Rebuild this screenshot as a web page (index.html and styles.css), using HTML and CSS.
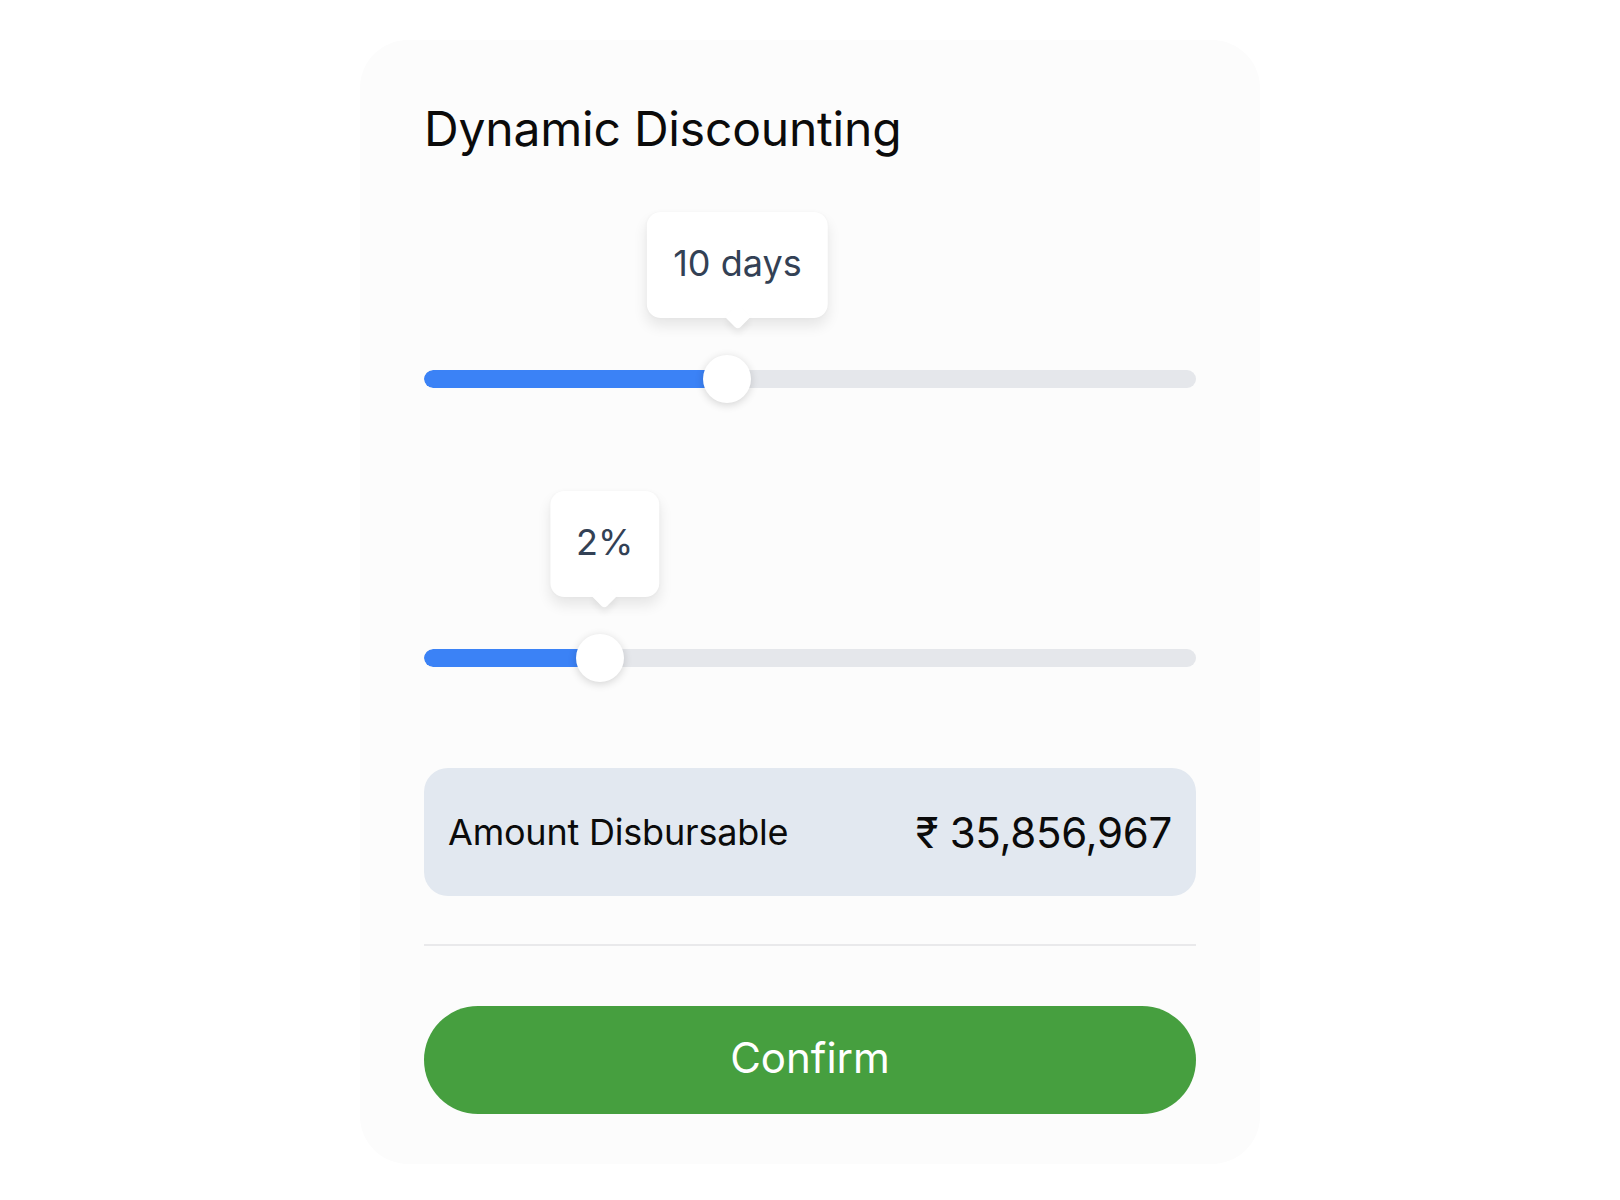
FILE: index.html
```html
<!DOCTYPE html>
<html lang="en">
<head>
<meta charset="utf-8">
<title>Dynamic Discounting</title>
<link rel="stylesheet" href="styles.css">
</head>
<body>
  <main class="card">
    <h1 class="title">Dynamic Discounting</h1>

    <div class="slider slider-days">
      <div class="track">
        <div class="fill" style="width: 39.25%"></div>
      </div>
      <div class="thumb" style="left: 39.25%"></div>
      <div class="tip" style="left: 40.6%">10 days</div>
    </div>

    <div class="slider slider-rate">
      <div class="track">
        <div class="fill" style="width: 22.8%"></div>
      </div>
      <div class="thumb" style="left: 22.8%"></div>
      <div class="tip" style="left: 23.4%">2%</div>
    </div>

    <div class="amount">
      <span class="amount-label">Amount Disbursable</span>
      <span class="amount-value">₹ 35,856,967</span>
    </div>

    <hr class="divider">

    <button class="confirm" type="button">Confirm</button>
  </main>
</body>
</html>
```

FILE: styles.css
```css
* { box-sizing: border-box; }

html, body {
  margin: 0;
  padding: 0;
  background: #ffffff;
}

body {
  font-family: Inter, "Noto Sans", "Liberation Sans", sans-serif;
  padding: 40px 0;
  display: flex;
  justify-content: center;
}

.card {
  width: 900px;
  height: 1124px;
  background: #fcfcfc;
  border-radius: 48px;
  padding: 60px 64px 42px;
  display: flex;
  flex-direction: column;
}

.title {
  margin: 0;
  font-size: 48px;
  line-height: 58px;
  font-weight: 400;
  color: #0b0b0b;
  letter-spacing: -0.2px;
}

.slider {
  position: relative;
  height: 48px;
  display: flex;
  align-items: center;
}

.slider-days { margin-top: 197px; }
.slider-rate { margin-top: 231px; }

.track {
  width: 100%;
  height: 18px;
  border-radius: 9px;
  background: #e5e7eb;
  overflow: hidden;
}

.fill {
  height: 100%;
  background: #3b82f6;
  border-radius: 9px 0 0 9px;
}

.thumb {
  position: absolute;
  top: 0;
  width: 48px;
  height: 48px;
  margin-left: -24px;
  border-radius: 50%;
  background: #ffffff;
  box-shadow: 0 2px 8px rgba(0, 0, 0, 0.16);
}

.tip {
  position: absolute;
  bottom: calc(100% + 37px);
  transform: translateX(-50%);
  background: #ffffff;
  border-radius: 14px;
  padding: 29px 26px 33px;
  font-size: 36px;
  line-height: 44px;
  color: #334155;
  white-space: nowrap;
  box-shadow: 0 8px 14px rgba(0, 0, 0, 0.09), 0 0 3px rgba(0, 0, 0, 0.03);
}

.tip::after {
  content: "";
  position: absolute;
  left: 50%;
  bottom: -8px;
  width: 18px;
  height: 18px;
  margin-left: -9px;
  background: #ffffff;
  border-radius: 0 0 4px 0;
  transform: rotate(45deg);
  box-shadow: 4px 4px 6px rgba(0, 0, 0, 0.06);
}

.amount {
  margin-top: 86px;
  height: 128px;
  border-radius: 24px;
  background: #e2e8f0;
  padding: 0 24px;
  display: flex;
  align-items: center;
  justify-content: space-between;
  color: #0b0b0b;
}

.amount-label {
  font-size: 36px;
  letter-spacing: -0.2px;
}

.amount-value {
  font-size: 42px;
  letter-spacing: -0.3px;
}

.divider {
  margin: 48px 0 0;
  border: 0;
  height: 2px;
  background: #e9e9eb;
}

.confirm {
  margin-top: 60px;
  height: 108px;
  border: 0;
  border-radius: 54px;
  background: #469f3f;
  color: #ffffff;
  font-family: inherit;
  font-size: 42px;
  font-weight: 400;
  padding: 0 0 6px;
  cursor: pointer;
}
```
